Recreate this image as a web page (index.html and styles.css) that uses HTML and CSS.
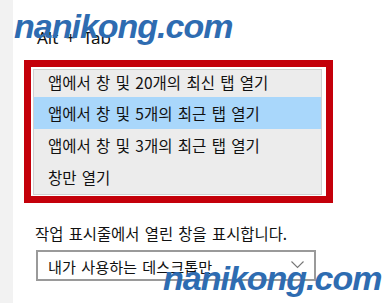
FILE: index.html
```html
<!DOCTYPE html>
<html lang="ko">
<head>
<meta charset="utf-8">
<link rel="stylesheet" href="styles.css">
</head>
<body>
<div class="page">
  <div class="strip"></div>
  <main class="main">
    <div class="label">Alt + Tab</div>
    <div class="highlight-box">
      <ul class="menu">
        <li class="item first">앱에서 창 및 20개의 최신 탭 열기</li>
        <li class="item selected">앱에서 창 및 5개의 최근 탭 열기</li>
        <li class="item">앱에서 창 및 3개의 최근 탭 열기</li>
        <li class="item">창만 열기</li>
      </ul>
    </div>
    <div class="desc">작업 표시줄에서 열린 창을 표시합니다.</div>
    <div class="select">
      <span>내가 사용하는 데스크톱만</span>
      <svg class="chev" width="13" height="8" viewBox="0 0 13 8"><path d="M0.5 0.5 L6.5 6.5 L12.5 0.5" fill="none" stroke="#777" stroke-width="1.1"/></svg>
    </div>
  </main>
  <div class="wm wm-top">nanikong.com</div>
  <div class="wm wm-bottom">nanikong.com</div>
</div>
</body>
</html>
```
FILE: styles.css
```css
html, body {
  margin: 0;
  padding: 0;
  background: #fff;
}
body {
  width: 387px;
  height: 308px;
  overflow: hidden;
  font-family: "Noto Sans CJK KR", "Noto Sans", sans-serif;
  color: #111;
}
.page {
  position: relative;
  display: flex;
  height: 308px;
}
.strip {
  width: 13px;
  height: 303px;
  background: #f2f2f2;
  flex: none;
}
.main {
  flex: 1;
  display: flex;
  flex-direction: column;
}
.label {
  margin: 28px 0 0 24px;
  font-family: "Noto Sans", sans-serif;
  font-size: 17px;
  line-height: 20px;
  word-spacing: 3px;
}
.highlight-box {
  margin: 12px 0 0 11px;
  width: 289px;
  border: 7px solid #c4000a;
  padding: 2px 4px 1px 2px;
  background: #fff;
}
.menu {
  list-style: none;
  margin: 0;
  padding: 0 0 1px 0;
  background: #ececec;
  border: 1px solid #d0d0d0;
}
.item {
  height: 32px;
  line-height: 32px;
  padding-left: 14px;
  font-size: 15.5px;
  word-spacing: 1px;
  white-space: nowrap;
}
.item.first {
  height: 27px;
  line-height: 25px;
}
.item.selected {
  background: #a9d7fb;
}
.desc {
  margin: 21px 0 0 22px;
  font-size: 15.4px;
  line-height: 18px;
  word-spacing: 1px;
}
.select {
  margin: 8px 0 0 23px;
  height: 27px;
  width: 256px;
  border: 2px solid #9a9a9a;
  display: flex;
  align-items: center;
  justify-content: space-between;
  padding: 0 10px 0 10px;
  font-size: 15.2px;
  word-spacing: 1px;
}
.chev {
  margin-top: -2px;
}
.wm {
  position: absolute;
  font-family: "Liberation Sans", sans-serif;
  font-weight: bold;
  font-style: italic;
  font-size: 34px;
  color: #2e6cb1;
  letter-spacing: -1px;
  line-height: 1;
}
.wm-top {
  left: 14px;
  top: 9px;
}
.wm-bottom {
  left: 163px;
  top: 261px;
}
```
